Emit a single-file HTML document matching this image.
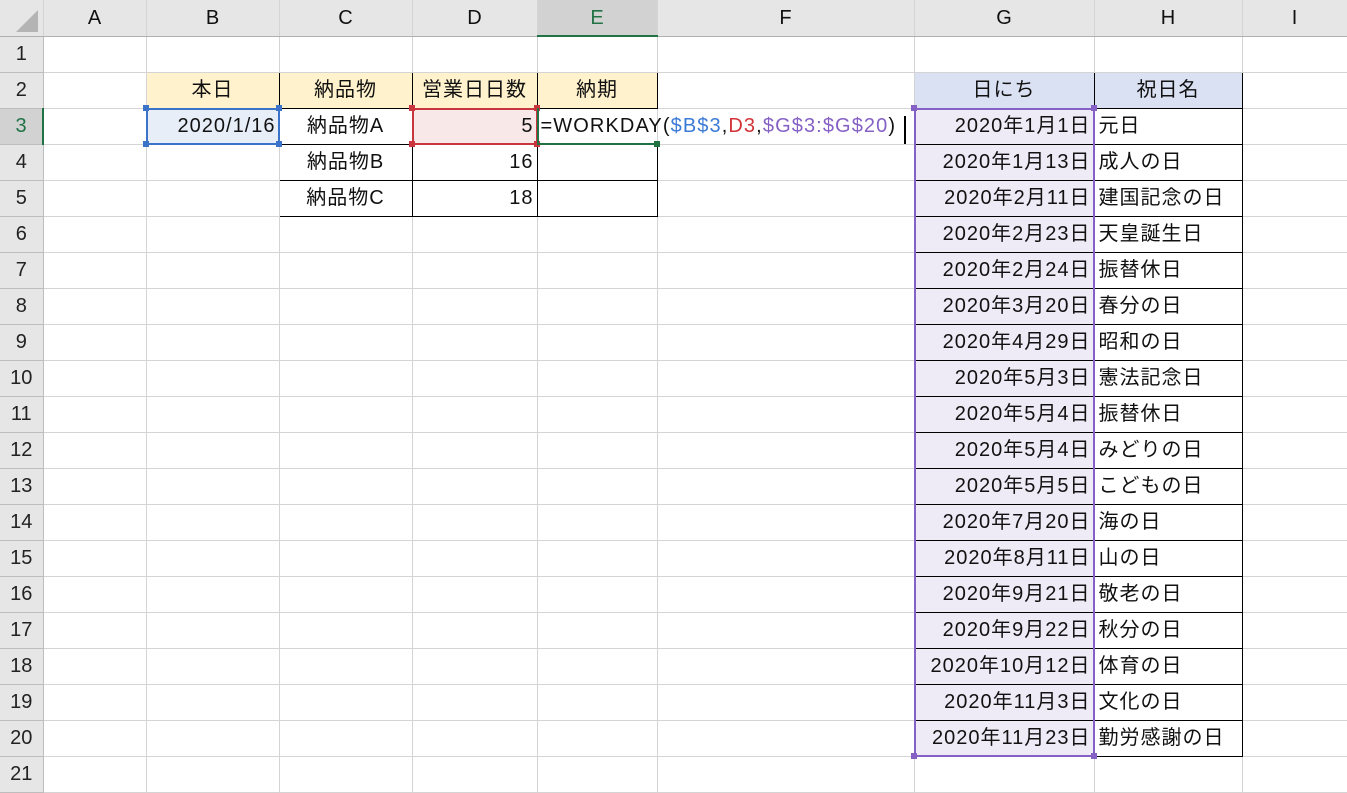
<!DOCTYPE html>
<html><head><meta charset="utf-8"><style>
*{margin:0;padding:0;box-sizing:border-box}
body{width:1347px;height:793px;overflow:hidden;background:#fff;font-family:"Liberation Sans","Noto Sans CJK JP",sans-serif;font-size:20px;color:#111;position:relative}
table{border-collapse:collapse;table-layout:fixed;position:absolute;left:0;top:0;width:1347px}
td{height:36px;border-right:1px solid #d4d4d4;border-bottom:1px solid #d4d4d4;padding:0 4px;white-space:nowrap;overflow:visible;line-height:34px;letter-spacing:1px}
td.h{background:#e6e6e6;text-align:center;color:#222;border-color:#bdbdbd;padding:0;letter-spacing:0}
tr.top td{background:#e6e6e6;text-align:center;border-bottom:1px solid #b0b0b0;letter-spacing:0}
td.y{background:#fff2cc;text-align:center;border:1px solid #000}
td.b{background:#d9e1f2;text-align:center;border:1px solid #000}
td.k{border:1px solid #000}
td.c{text-align:center}
td.r{text-align:right;padding-right:3px}
td.p{background:#efebf6;text-align:right;border:1px solid #000;padding-right:3px}
.ov{position:absolute;pointer-events:none}
.sq{position:absolute;width:6px;height:6px}
</style></head><body>
<table>
<colgroup><col style="width:43px"><col style="width:103px"><col style="width:133px"><col style="width:133px"><col style="width:125px"><col style="width:120px"><col style="width:257px"><col style="width:180px"><col style="width:148px"><col style="width:105px"></colgroup>
<tr class="top"><td></td><td>A</td><td>B</td><td>C</td><td>D</td><td style="background:#d2d2d2;border-bottom:2px solid #217346;color:#217346">E</td><td>F</td><td>G</td><td>H</td><td>I</td></tr>
<tr><td class="h">1</td><td></td><td></td><td></td><td></td><td></td><td></td><td></td><td></td><td></td></tr>
<tr><td class="h">2</td><td></td><td class="y">本日</td><td class="y">納品物</td><td class="y">営業日日数</td><td class="y">納期</td><td></td><td class="b">日にち</td><td class="b">祝日名</td><td></td></tr>
<tr><td class="h" style="background:#d2d2d2;border-right:2px solid #217346;color:#217346">3</td><td></td><td class="r" style="background:#e8eef8">2020/1/16</td><td class="k c">納品物A</td><td class="k r" style="background:#f8e8e8">5</td><td style="overflow:visible;padding-left:3px;letter-spacing:1.1px">=WORKDAY(<span style="color:#3b7ad6">$B$3</span>,<span style="color:#d13438">D3</span>,<span style="color:#8661c5">$G$3:$G$20</span>)</td><td></td><td class="p">2020年1月1日</td><td class="k">元日</td><td></td></tr>
<tr><td class="h">4</td><td></td><td></td><td class="k c">納品物B</td><td class="k r">16</td><td class="k"></td><td></td><td class="p">2020年1月13日</td><td class="k">成人の日</td><td></td></tr>
<tr><td class="h">5</td><td></td><td></td><td class="k c">納品物C</td><td class="k r">18</td><td class="k"></td><td></td><td class="p">2020年2月11日</td><td class="k">建国記念の日</td><td></td></tr>
<tr><td class="h">6</td><td></td><td></td><td></td><td></td><td></td><td></td><td class="p">2020年2月23日</td><td class="k">天皇誕生日</td><td></td></tr>
<tr><td class="h">7</td><td></td><td></td><td></td><td></td><td></td><td></td><td class="p">2020年2月24日</td><td class="k">振替休日</td><td></td></tr>
<tr><td class="h">8</td><td></td><td></td><td></td><td></td><td></td><td></td><td class="p">2020年3月20日</td><td class="k">春分の日</td><td></td></tr>
<tr><td class="h">9</td><td></td><td></td><td></td><td></td><td></td><td></td><td class="p">2020年4月29日</td><td class="k">昭和の日</td><td></td></tr>
<tr><td class="h">10</td><td></td><td></td><td></td><td></td><td></td><td></td><td class="p">2020年5月3日</td><td class="k">憲法記念日</td><td></td></tr>
<tr><td class="h">11</td><td></td><td></td><td></td><td></td><td></td><td></td><td class="p">2020年5月4日</td><td class="k">振替休日</td><td></td></tr>
<tr><td class="h">12</td><td></td><td></td><td></td><td></td><td></td><td></td><td class="p">2020年5月4日</td><td class="k">みどりの日</td><td></td></tr>
<tr><td class="h">13</td><td></td><td></td><td></td><td></td><td></td><td></td><td class="p">2020年5月5日</td><td class="k">こどもの日</td><td></td></tr>
<tr><td class="h">14</td><td></td><td></td><td></td><td></td><td></td><td></td><td class="p">2020年7月20日</td><td class="k">海の日</td><td></td></tr>
<tr><td class="h">15</td><td></td><td></td><td></td><td></td><td></td><td></td><td class="p">2020年8月11日</td><td class="k">山の日</td><td></td></tr>
<tr><td class="h">16</td><td></td><td></td><td></td><td></td><td></td><td></td><td class="p">2020年9月21日</td><td class="k">敬老の日</td><td></td></tr>
<tr><td class="h">17</td><td></td><td></td><td></td><td></td><td></td><td></td><td class="p">2020年9月22日</td><td class="k">秋分の日</td><td></td></tr>
<tr><td class="h">18</td><td></td><td></td><td></td><td></td><td></td><td></td><td class="p">2020年10月12日</td><td class="k">体育の日</td><td></td></tr>
<tr><td class="h">19</td><td></td><td></td><td></td><td></td><td></td><td></td><td class="p">2020年11月3日</td><td class="k">文化の日</td><td></td></tr>
<tr><td class="h">20</td><td></td><td></td><td></td><td></td><td></td><td></td><td class="p">2020年11月23日</td><td class="k">勤労感謝の日</td><td></td></tr>
<tr><td class="h">21</td><td></td><td></td><td></td><td></td><td></td><td></td><td></td><td></td><td></td></tr>
</table>
<div class="ov" style="left:146px;top:108px;width:134px;height:37px;border:2px solid #3b73c8"></div>
<div class="sq" style="left:143px;top:105px;background:#3b73c8"></div><div class="sq" style="left:276px;top:105px;background:#3b73c8"></div><div class="sq" style="left:143px;top:141px;background:#3b73c8"></div><div class="sq" style="left:276px;top:141px;background:#3b73c8"></div>
<div class="ov" style="left:412px;top:108px;width:126px;height:37px;border:2px solid #c9363e"></div>
<div class="sq" style="left:409px;top:105px;background:#c9363e"></div><div class="sq" style="left:534px;top:105px;background:#c9363e"></div><div class="sq" style="left:409px;top:141px;background:#c9363e"></div><div class="sq" style="left:534px;top:141px;background:#c9363e"></div>
<div class="ov" style="left:537px;top:108px;width:121px;height:37px;border-left:2px solid #217346;border-bottom:2px solid #217346"></div>
<div class="sq" style="left:654px;top:141px;background:#217346"></div>
<div class="ov" style="left:904px;top:116px;width:2px;height:28px;background:#000"></div>
<div class="ov" style="left:914px;top:108px;width:181px;height:649px;border:2px solid #8661c5"></div>
<div class="sq" style="left:911px;top:105px;background:#8661c5"></div><div class="sq" style="left:1091px;top:105px;background:#8661c5"></div><div class="sq" style="left:911px;top:753px;background:#8661c5"></div><div class="sq" style="left:1091px;top:753px;background:#8661c5"></div>
<svg class="ov" style="left:10px;top:6px" width="30" height="28"><polygon points="28,4 28,26 6,26" fill="#b4b4b4"/></svg>
</body></html>
